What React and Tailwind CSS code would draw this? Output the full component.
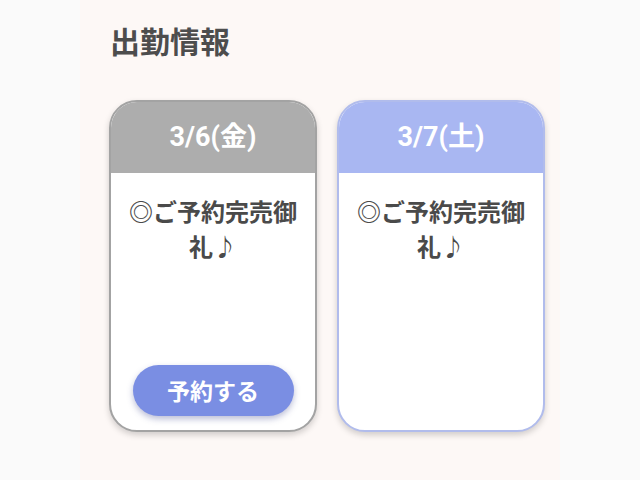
import React from 'react';

const days = [
    { id: 1, date: '3/6(金)', note: '◎ご予約完売御礼♪', head: 'bg-[#adadad]', border: 'border-[#a3a3a3]', reserve: true },
    { id: 2, date: '3/7(土)', note: '◎ご予約完売御礼♪', head: 'bg-[#a9b7f2]', border: 'border-[#b1bcec]', reserve: false },
];

function DayCard({ day }) {
    return (
        <div className={`w-[208px] h-[332px] flex flex-col rounded-[28px] overflow-hidden bg-white border-2 ${day.border} shadow-[0_3px_6px_rgba(0,0,0,0.18)]`}>
            <div className={`${day.head} h-[71px] flex items-center justify-center text-white text-[27px] font-bold`} style={{ fontFamily: 'Roboto, "Noto Sans CJK JP", sans-serif' }}>
                {day.date}
            </div>
            <div className="flex-1 flex flex-col items-center px-4 pt-[20px]">
                <p className="text-[24px] leading-[35px] font-bold text-[#4a4a4a] text-center">{day.note}</p>
                {day.reserve && (
                    <button className="mt-auto mb-[14px] w-[161px] h-[51px] rounded-full bg-[#7a8ee3] text-white text-[23px] font-bold shadow-[0_3px_6px_rgba(60,70,140,0.35)]">
                        予約する
                    </button>
                )}
            </div>
        </div>
    );
}

export default function App() {
    return (
        <div className="w-[640px] h-[480px] bg-[#fafafa] flex justify-center overflow-hidden" style={{ fontFamily: '"Noto Sans CJK JP", "Noto Sans", sans-serif' }}>
            <div className="w-[480px] h-full bg-[#fdf8f6] pl-[29px] pt-[20px]">
                <h1 className="text-[30px] leading-[40px] font-bold text-[#4d4d4d] pl-[1px]">出勤情報</h1>
                <div className="flex gap-[20px] mt-[40px]">
                    {days.map(d => <DayCard key={d.id} day={d} />)}
                </div>
            </div>
        </div>
    );
}
